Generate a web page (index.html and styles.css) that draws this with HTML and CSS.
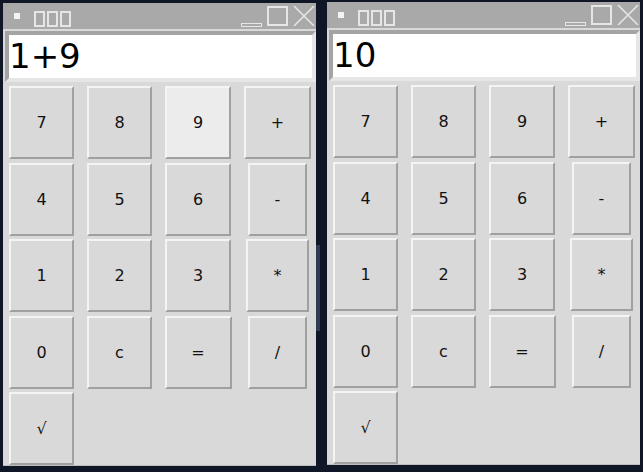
FILE: index.html
```html
<!DOCTYPE html>
<html lang="en">
<head>
    <meta charset="UTF-8">
    <title>Calculator</title>
    <link rel="stylesheet" href="styles.css">
</head>
<body>
    <div class="desktop">
        <span class="desk-strip"></span>

        <div class="window win-one">
            <div class="titlebar">
                <span class="app-icon"></span>
                <span class="title"><i></i><i></i><i></i></span>
                <span class="controls">
                    <span class="ctl-min"></span>
                    <span class="ctl-max"></span>
                    <svg class="ctl-close" width="22" height="20" viewBox="0 0 22 20">
                        <path d="M1 0 L21 20 M21 0 L1 20" stroke="#e4e4e4" stroke-width="1.6" fill="none"/>
                    </svg>
                </span>
            </div>
            <div class="display">1+9</div>
            <div class="keys">
                <button class="key">7</button>
                <button class="key">8</button>
                <button class="key key-hover">9</button>
                <button class="key key-plus">+</button>
                <button class="key">4</button>
                <button class="key">5</button>
                <button class="key">6</button>
                <button class="key key-narrow">-</button>
                <button class="key">1</button>
                <button class="key">2</button>
                <button class="key">3</button>
                <button class="key key-mid">*</button>
                <button class="key">0</button>
                <button class="key">c</button>
                <button class="key key-eq">=</button>
                <button class="key key-narrow">/</button>
                <button class="key">√</button>
            </div>
        </div>

        <div class="window win-two">
            <div class="titlebar">
                <span class="app-icon"></span>
                <span class="title"><i></i><i></i><i></i></span>
                <span class="controls">
                    <span class="ctl-min"></span>
                    <span class="ctl-max"></span>
                    <svg class="ctl-close" width="22" height="20" viewBox="0 0 22 20">
                        <path d="M1 0 L21 20 M21 0 L1 20" stroke="#e4e4e4" stroke-width="1.6" fill="none"/>
                    </svg>
                </span>
            </div>
            <div class="display">10</div>
            <div class="keys">
                <button class="key">7</button>
                <button class="key">8</button>
                <button class="key">9</button>
                <button class="key key-plus">+</button>
                <button class="key">4</button>
                <button class="key">5</button>
                <button class="key">6</button>
                <button class="key key-narrow">-</button>
                <button class="key">1</button>
                <button class="key">2</button>
                <button class="key">3</button>
                <button class="key key-mid">*</button>
                <button class="key">0</button>
                <button class="key">c</button>
                <button class="key key-eq">=</button>
                <button class="key key-narrow">/</button>
                <button class="key">√</button>
            </div>
        </div>
    </div>
</body>
</html>
```

FILE: styles.css
```css
body {
    margin: 0;
    background: #0f1626;
    font-family: 'DejaVu Sans', sans-serif;
}

.desktop {
    position: relative;
    width: 643px;
    height: 472px;
    overflow: hidden;
}

/* faint panel edge showing between the two windows */
.desk-strip {
    position: absolute;
    left: 316px;
    top: 245px;
    width: 4px;
    height: 86px;
    background: #313b54;
}

.window {
    position: absolute;
    width: 313px;
    height: 463px;
    background: #d9d9d9;
    box-sizing: border-box;
    border-bottom: 1px solid #bdbdbd;
}

.win-one {
    left: 3px;
    top: 3px;
}

.win-two {
    left: 327px;
    top: 2px;
}

.titlebar {
    height: 26px;
    background: #a9a9a9;
    display: flex;
    align-items: flex-start;
}

.app-icon {
    width: 6px;
    height: 6px;
    margin: 10px 0 0 11px;
    background: #f4f4f4;
}

.title {
    display: flex;
    gap: 2px;
    margin: 8px 0 0 14px;
}

.title i {
    width: 11px;
    height: 16px;
    box-sizing: border-box;
    border: 2px solid #e6e6e6;
}

.controls {
    display: flex;
    align-items: flex-start;
    margin-left: auto;
    margin-right: 1px;
}

.ctl-min {
    width: 21px;
    height: 4px;
    margin-top: 20px;
    box-sizing: border-box;
    border: 1px solid #e6e6e6;
}

.ctl-max {
    width: 21px;
    height: 20px;
    margin: 3px 0 0 5px;
    box-sizing: border-box;
    border: 2px solid #e6e6e6;
}

.ctl-close {
    display: block;
    margin: 3px 0 0 5px;
}

.display {
    margin: 2px 0 0 2px;
    width: 311px;
    height: 51px;
    box-sizing: border-box;
    border: 4px solid;
    border-color: #a4a4a4 #e6e6e6 #e6e6e6 #a4a4a4;
    background: #fff;
    color: #000;
    font-size: 34px;
    line-height: 42px;
    padding-left: 0;
}

.keys {
    display: grid;
    grid-template-columns: 65px 65px 66px 67px;
    grid-template-rows: repeat(5, 73px);
    column-gap: 13px;
    row-gap: 3.5px;
    margin: 4px 0 0 6px;
}

.key {
    width: 100%;
    height: 100%;
    box-sizing: border-box;
    margin: 0;
    padding: 0;
    background: #d9d9d9;
    border: 2px solid;
    border-color: #f4f4f4 #a0a0a0 #a0a0a0 #f4f4f4;
    font-family: 'DejaVu Sans', sans-serif;
    font-size: 16px;
    color: #111;
    justify-self: center;
}

.key-hover {
    background: #ececec;
}

.key-narrow {
    width: 59px;
}

.key-mid {
    width: 63px;
}

.key-eq {
    width: 67px;
}
```
